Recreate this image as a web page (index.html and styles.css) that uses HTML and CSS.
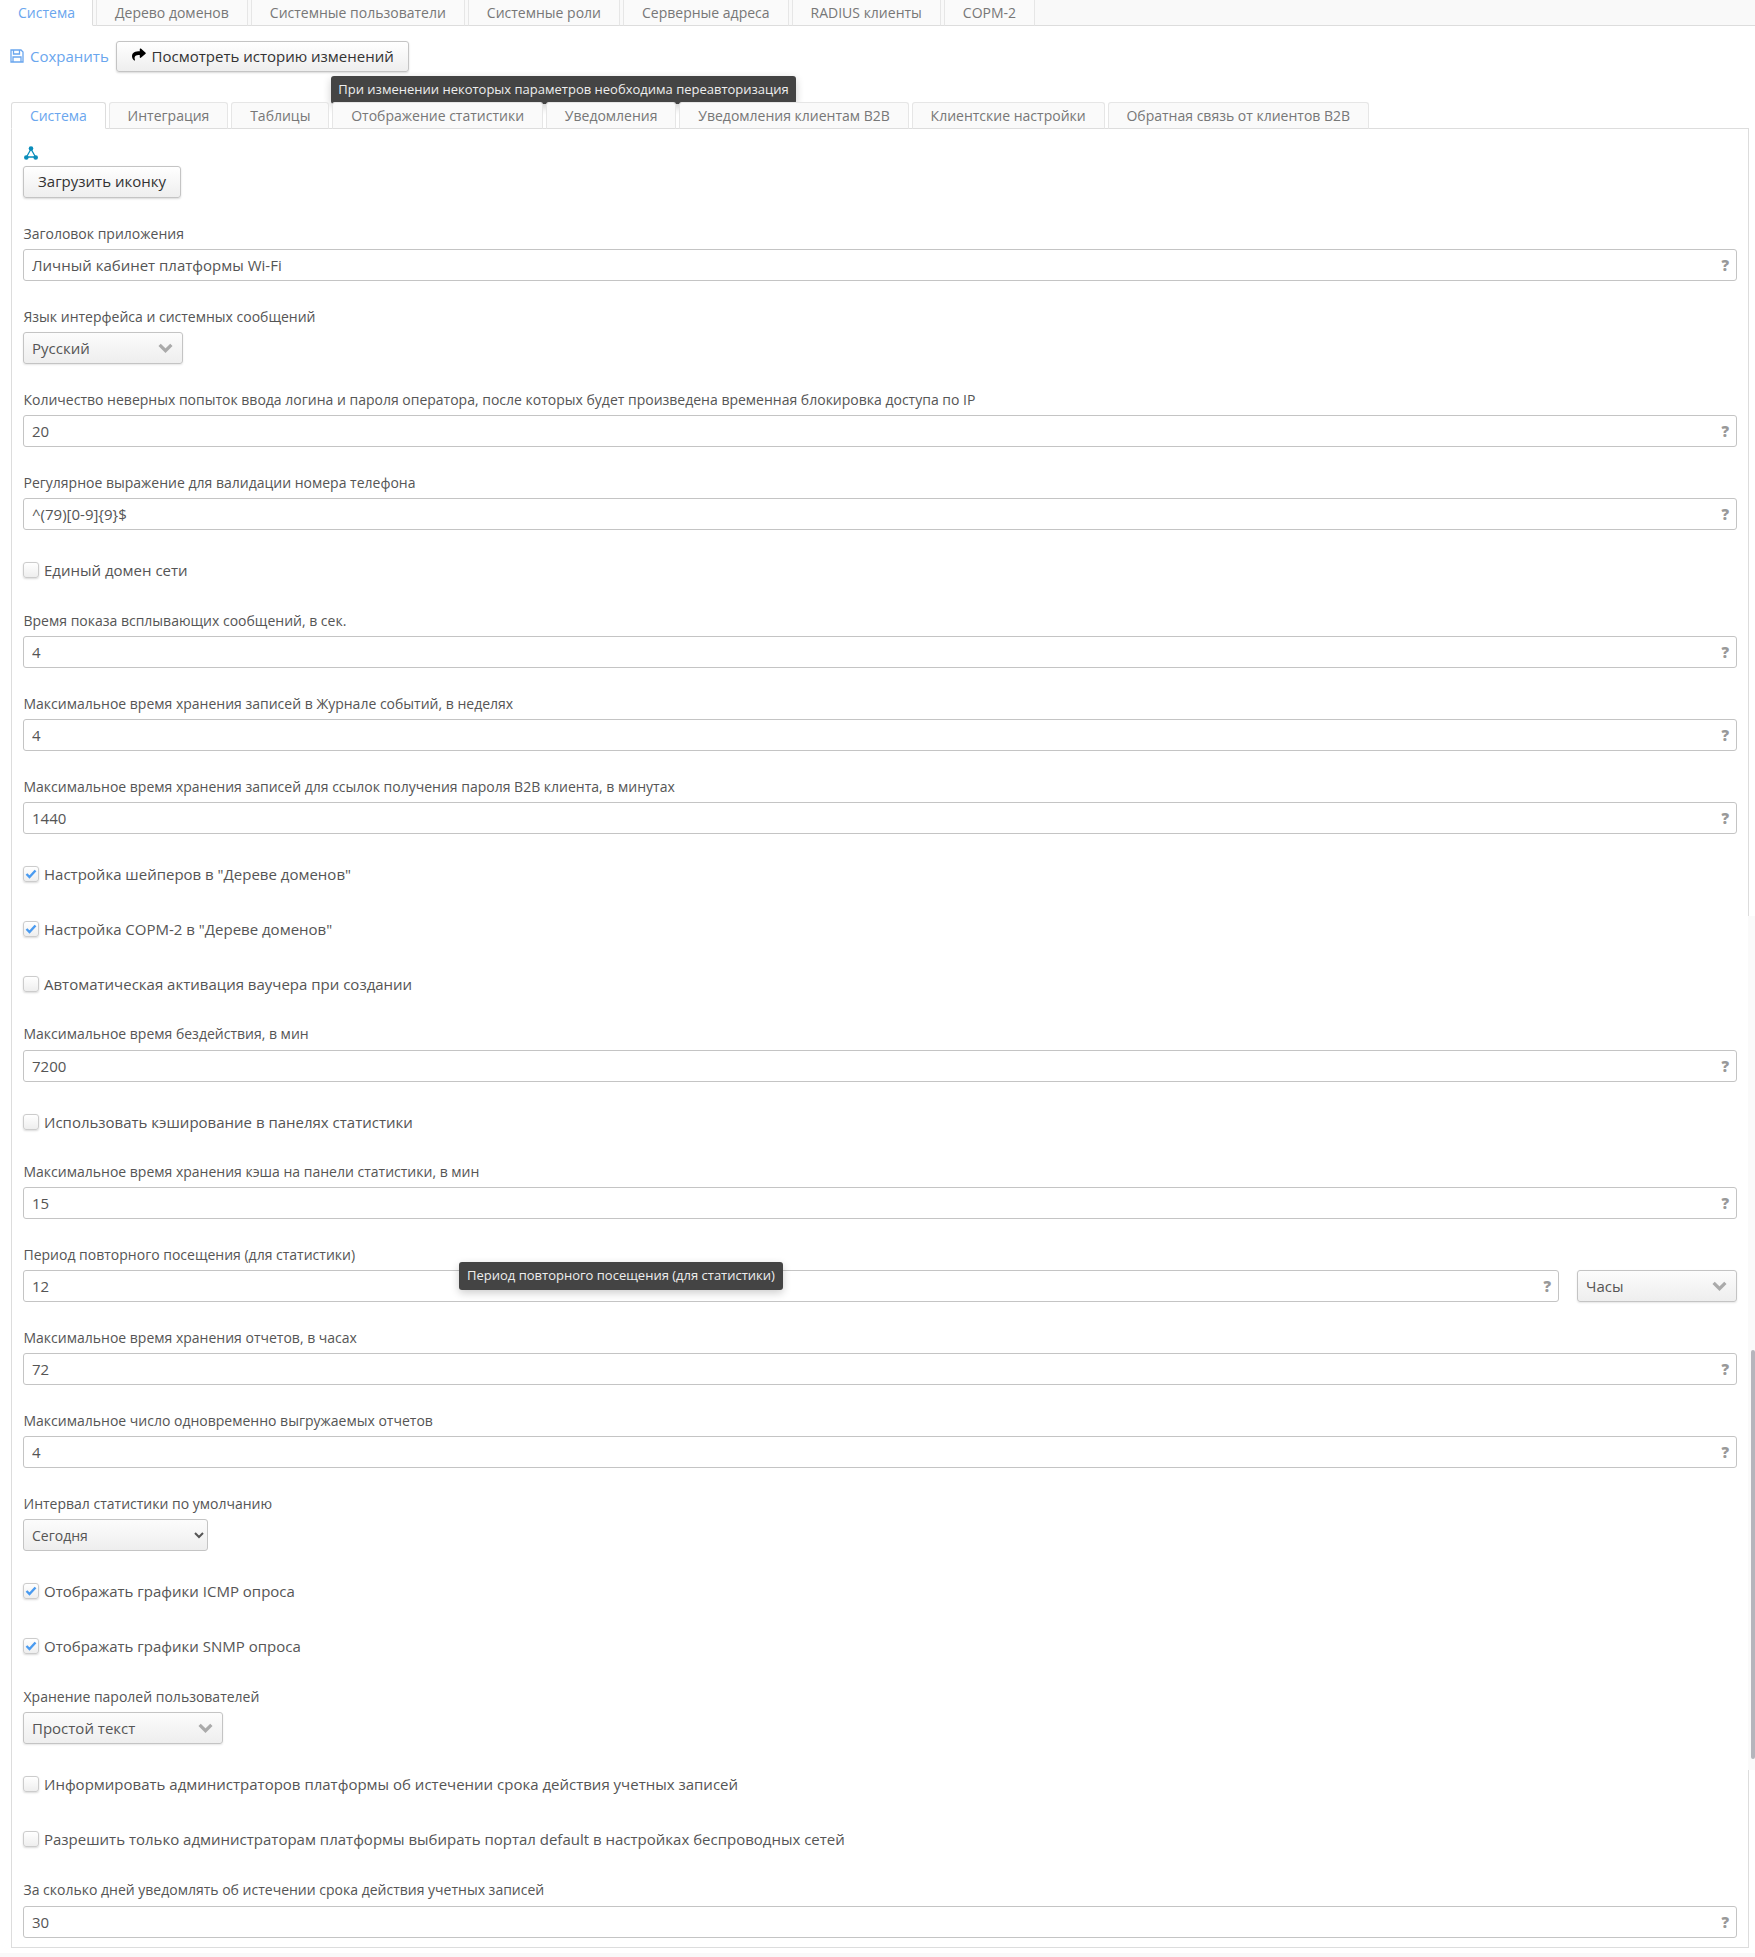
FILE: index.html
```html
<!DOCTYPE html>
<html lang="ru">
<head>
    <meta charset="UTF-8">
    <title>Система</title>
    <link rel="stylesheet" href="styles.css">
</head>
<body>
    <nav class="tabs top-tabs">
        <a class="tab active">Система</a>
        <a class="tab">Дерево доменов</a>
        <a class="tab">Системные пользователи</a>
        <a class="tab">Системные роли</a>
        <a class="tab">Серверные адреса</a>
        <a class="tab">RADIUS клиенты</a>
        <a class="tab">СОРМ-2</a>
    </nav>

    <div class="toolbar">
        <a class="save-link">
            <svg class="save-icon" viewBox="0 0 14 14"><path d="M1 1h10l2 2v10H1z M3.500 1v4h6V1 M3 13V8h8v5" fill="none" stroke="currentColor" stroke-width="1.300"/></svg>
            Сохранить
        </a>
        <button class="btn history-btn">
            <svg class="share-icon" viewBox="0 0 512 512"><path d="M503.700 189.800L327.700 37.900C312.300 24.500 288 35.300 288 56v80.100C127.400 137.900 0 170.100 0 322.300c0 61.400 39.600 122.200 83.300 154 13.700 9.900 33.100-2.500 28.100-18.600C66 312.800 132.900 274.300 288 272.100V360c0 20.700 24.300 31.500 39.700 18.200l176-152c11.100-9.600 11.100-26.800 0-36.400z"/></svg>
            Посмотреть историю изменений
        </button>
    </div>

    <nav class="tabs inner-tabs">
        <a class="tab active">Система</a>
        <a class="tab">Интеграция</a>
        <a class="tab">Таблицы</a>
        <a class="tab">Отображение статистики</a>
        <a class="tab">Уведомления</a>
        <a class="tab">Уведомления клиентам B2B</a>
        <a class="tab">Клиентские настройки</a>
        <a class="tab">Обратная связь от клиентов B2B</a>
    </nav>

    <main class="panel">
        <svg class="logo" viewBox="0 0 14 14">
            <path d="M7 3L2.500 11H11.500Z" fill="none" stroke="#0a8dbb" stroke-width="1.300"/>
            <circle cx="7" cy="2.500" r="2.300" fill="#0a8dbb"/>
            <circle cx="2.300" cy="11.500" r="2.300" fill="#0a8dbb"/>
            <circle cx="11.700" cy="11.500" r="2.300" fill="#0a8dbb"/>
        </svg>
        <div class="group">
            <button class="btn upload-btn">Загрузить иконку</button>
        </div>

        <div class="group">
            <label>Заголовок приложения</label>
            <div class="field"><input value="Личный кабинет платформы Wi-Fi"><span class="hint">?</span></div>
        </div>
        <div class="group">
            <label>Язык интерфейса и системных сообщений</label>
            <div class="dropdown lang"><span>Русский</span><svg class="chevron" viewBox="0 0 14 9"><path d="M1.500 1.500L7 7l5.500-5.500" /></svg></div>
        </div>
        <div class="group">
            <label>Количество неверных попыток ввода логина и пароля оператора, после которых будет произведена временная блокировка доступа по IP</label>
            <div class="field"><input value="20"><span class="hint">?</span></div>
        </div>
        <div class="group">
            <label>Регулярное выражение для валидации номера телефона</label>
            <div class="field"><input value="^(79)[0-9]{9}$"><span class="hint">?</span></div>
        </div>
        <div class="group check-row"><span class="check"></span>Единый домен сети</div>
        <div class="group">
            <label>Время показа всплывающих сообщений, в сек.</label>
            <div class="field"><input value="4"><span class="hint">?</span></div>
        </div>
        <div class="group">
            <label>Максимальное время хранения записей в Журнале событий, в неделях</label>
            <div class="field"><input value="4"><span class="hint">?</span></div>
        </div>
        <div class="group">
            <label>Максимальное время хранения записей для ссылок получения пароля B2B клиента, в минутах</label>
            <div class="field"><input value="1440"><span class="hint">?</span></div>
        </div>
        <div class="group check-row"><span class="check"><svg viewBox="0 0 12 10"><path d="M1.500 5l3 3 6-6.500"/></svg></span>Настройка шейперов в "Дереве доменов"</div>
        <div class="group check-row"><span class="check"><svg viewBox="0 0 12 10"><path d="M1.500 5l3 3 6-6.500"/></svg></span>Настройка СОРМ-2 в "Дереве доменов"</div>
        <div class="group check-row tight"><span class="check"></span>Автоматическая активация ваучера при создании</div>
        <div class="group wide-label">
            <label>Максимальное время бездействия, в мин</label>
            <div class="field"><input value="7200"><span class="hint">?</span></div>
        </div>
        <div class="group check-row tight"><span class="check"></span>Использовать кэширование в панелях статистики</div>
        <div class="group">
            <label>Максимальное время хранения кэша на панели статистики, в мин</label>
            <div class="field"><input value="15"><span class="hint">?</span></div>
        </div>
        <div class="group">
            <label>Период повторного посещения (для статистики)</label>
            <div class="field-row">
                <div class="field"><input value="12"><span class="hint">?</span></div>
                <div class="dropdown units"><span>Часы</span><svg class="chevron" viewBox="0 0 14 9"><path d="M1.500 1.500L7 7l5.500-5.500" /></svg></div>
            </div>
        </div>
        <div class="group">
            <label>Максимальное время хранения отчетов, в часах</label>
            <div class="field"><input value="72"><span class="hint">?</span></div>
        </div>
        <div class="group">
            <label>Максимальное число одновременно выгружаемых отчетов</label>
            <div class="field"><input value="4"><span class="hint">?</span></div>
        </div>
        <div class="group">
            <label>Интервал статистики по умолчанию</label>
            <select class="native-select"><option>Сегодня</option></select>
        </div>
        <div class="group check-row"><span class="check"><svg viewBox="0 0 12 10"><path d="M1.500 5l3 3 6-6.500"/></svg></span>Отображать графики ICMP опроса</div>
        <div class="group check-row"><span class="check"><svg viewBox="0 0 12 10"><path d="M1.500 5l3 3 6-6.500"/></svg></span>Отображать графики SNMP опроса</div>
        <div class="group">
            <label>Хранение паролей пользователей</label>
            <div class="dropdown storage"><span>Простой текст</span><svg class="chevron" viewBox="0 0 14 9"><path d="M1.500 1.500L7 7l5.500-5.500" /></svg></div>
        </div>
        <div class="group check-row"><span class="check"></span>Информировать администраторов платформы об истечении срока действия учетных записей</div>
        <div class="group check-row"><span class="check"></span>Разрешить только администраторам платформы выбирать портал default в настройках беспроводных сетей</div>
        <div class="group wide-label">
            <label>За сколько дней уведомлять об истечении срока действия учетных записей</label>
            <div class="field"><input value="30"><span class="hint">?</span></div>
        </div>
    </main>
    <div class="bottom-strip"></div>

    <div class="tooltip tooltip-auth">При изменении некоторых параметров необходима переавторизация</div>
    <div class="tooltip tooltip-period">Период повторного посещения (для статистики)</div>

    <div class="scroll-track"><div class="scroll-thumb"></div></div>
</body>
</html>
```

FILE: styles.css
```css
:root {
    --border-color: #ddd;
    --input-border: #c4c4c4;
    --text-color: #555;
    --link-color: #6aa6ee;
    --tab-bg: #fafafa;
}
html, body {
    margin: 0;
    height: 1957px;
    overflow: hidden;
}
body {
    position: relative;
    background: #fff;
    color: var(--text-color);
    font-family: "Open Sans", sans-serif;
    font-size: 15px;
}
.tabs {
    display: flex;
    gap: 3px;
    height: 25px;
    font-size: 14px;
}
.tab {
    box-sizing: border-box;
    padding: 0 18px;
    background: var(--tab-bg);
    border: 1px solid #e6e6e6;
    border-bottom: 1px solid var(--border-color);
    color: #777;
    line-height: 25px;
    white-space: nowrap;
}
.tab.active {
    background: #fff;
    border-color: var(--border-color);
    border-bottom-color: #fff;
    color: var(--link-color);
}
.top-tabs {
    background: #f9f9f9;
    border-bottom: 1px solid var(--border-color);
}
.top-tabs .tab {
    height: 26px;
    border-top: 0;
}
.top-tabs .tab.active {
    padding-right: 17px;
    border-left: 0;
}
.toolbar {
    display: flex;
    align-items: center;
    height: 31px;
    margin: 15px 0 30px;
    padding-left: 10px;
}
.save-link {
    display: flex;
    align-items: center;
    gap: 6px;
    margin-top: -2px;
    margin-right: 7px;
    color: var(--link-color);
}
.save-icon {
    width: 14px;
    height: 14px;
}
.btn {
    box-sizing: border-box;
    height: 32px;
    padding: 0 14px 2px;
    background: linear-gradient(#fff, #eee);
    border: 1px solid var(--input-border);
    border-radius: 3px;
    box-shadow: 0 1px 2px rgba(0, 0, 0, 0.15);
    color: #333;
    font-family: inherit;
    font-size: 15px;
}
.history-btn {
    display: flex;
    align-items: center;
    gap: 6px;
    width: 293px;
    height: 31px;
    padding-left: 15px;
    white-space: nowrap;
}
.share-icon {
    width: 15px;
    height: 15px;
    margin-top: -3px;
}
.upload-btn {
    display: block;
    width: 158px;
    padding: 0 0 2px;
}
.inner-tabs {
    position: relative;
    z-index: 1;
    height: 27px;
    margin-left: 11px;
}
.inner-tabs .tab {
    padding: 0 17.900px;
    border-radius: 3px 3px 0 0;
    height: 27px;
    line-height: 25px;
}
.panel {
    box-sizing: border-box;
    height: 1820px;
    margin: -1px 6px 0 11px;
    padding: 18px 11px 11px;
    border: 1px solid var(--border-color);
}
.logo {
    display: block;
    width: 14px;
    height: 14px;
    margin: -1px 0 6px 1px;
}
.group {
    margin-bottom: 27px;
}
.group:last-child {
    margin-bottom: 0;
}
.group.tight {
    margin-bottom: 26px;
}
.group label {
    display: block;
    height: 18px;
    margin-bottom: 6px;
    padding-left: 0.500px;
    font-size: 14px;
    line-height: 18px;
}
.group.wide-label label {
    margin-bottom: 7px;
}
.field {
    position: relative;
    flex: 1;
}
.field input {
    display: block;
    box-sizing: border-box;
    width: 100%;
    height: 32px;
    padding: 0 28px 0 8px;
    border: 1px solid var(--input-border);
    border-radius: 3px;
    color: var(--text-color);
    font-family: inherit;
    font-size: 15px;
    outline: none;
}
.hint {
    position: absolute;
    top: 0;
    right: 8px;
    color: #999;
    font-size: 15px;
    font-weight: 800;
    line-height: 32px;
}
.field-row {
    display: flex;
    gap: 18px;
}
.dropdown {
    box-sizing: border-box;
    display: flex;
    align-items: center;
    justify-content: space-between;
    height: 32px;
    padding: 0 9px 0 8px;
    background: linear-gradient(#fcfcfc, #eee);
    border: 1px solid var(--input-border);
    border-radius: 3px;
    box-shadow: 0 1px 2px rgba(0, 0, 0, 0.1);
}
.lang, .units {
    width: 160px;
}
.storage {
    width: 200px;
}
.chevron {
    width: 15px;
    height: 10px;
    fill: none;
    stroke: #aaa;
    stroke-width: 3;
}
.native-select {
    display: block;
    box-sizing: border-box;
    width: 185px;
    height: 32px;
    padding: 0 4px;
    background: linear-gradient(#fcfcfc, #eee);
    border: 1px solid var(--input-border);
    border-radius: 3px;
    color: var(--text-color);
    font-family: inherit;
    font-size: 14px;
}
.check-row {
    box-sizing: border-box;
    display: flex;
    align-items: center;
    gap: 5px;
    height: 28px;
    padding-bottom: 2px;
}
.check {
    box-sizing: border-box;
    display: flex;
    align-items: center;
    justify-content: center;
    width: 16px;
    height: 16px;
    background: linear-gradient(#fff, #eee);
    border: 1px solid #ccc;
    border-radius: 3px;
    box-shadow: 0 1px 2px rgba(0, 0, 0, 0.15);
}
.check svg {
    width: 12px;
    height: 10px;
    fill: none;
    stroke: #4a9bf0;
    stroke-width: 2.400;
}
.bottom-strip {
    height: 4px;
    margin-top: 5px;
    background: #f9f9f9;
}
.tooltip {
    position: absolute;
    box-sizing: border-box;
    height: 28px;
    background: #444;
    border-radius: 3px;
    box-shadow: 0 3px 8px rgba(0, 0, 0, 0.2);
    color: #eee;
    font-size: 13px;
    line-height: 27px;
    text-align: center;
    white-space: nowrap;
}
.tooltip-auth {
    top: 76px;
    left: 331px;
    width: 465px;
}
.tooltip-period {
    top: 1262px;
    left: 459px;
    width: 324px;
}
.scroll-track {
    position: absolute;
    top: 916px;
    right: 0;
    width: 7px;
    height: 854px;
    background: #fafafa;
}
.scroll-thumb {
    position: absolute;
    top: 434px;
    right: 0;
    width: 4px;
    height: 409px;
    background: #b5b5bc;
    border-radius: 2px;
}
```
